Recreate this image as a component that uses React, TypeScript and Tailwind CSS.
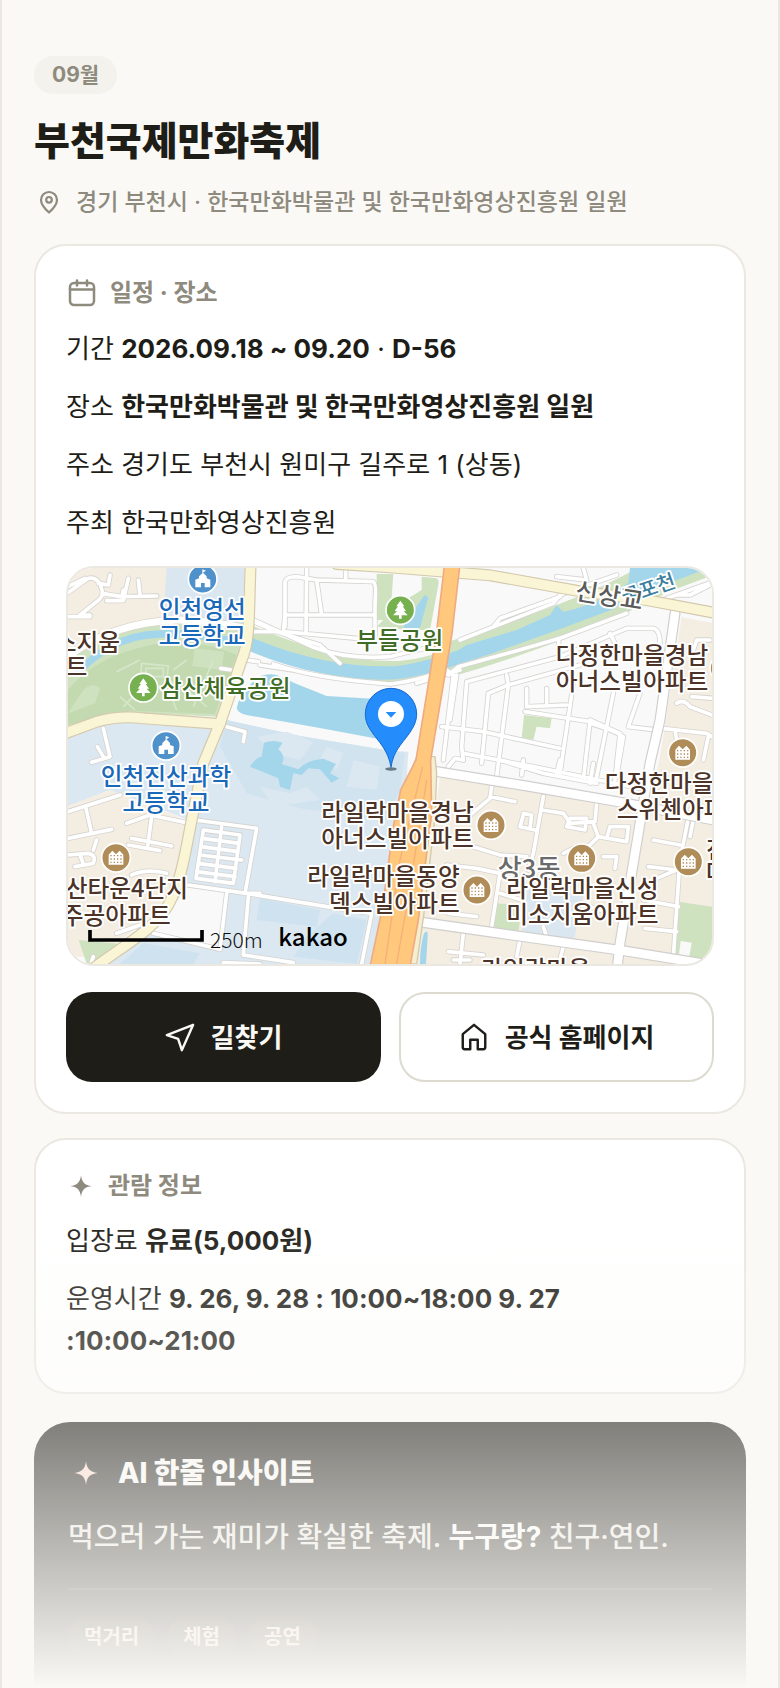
import React from 'react';

const tags = ['먹거리', '체험', '공연'];

const INK = '#4b3327';
const BLUE = '#1a68b8';
const GREEN = '#3f6d25';

type Label = {
  text: string;
  x: number;
  y: number;
  color: string;
  anchor?: 'start' | 'middle' | 'end';
  rotate?: number;
  size?: number;
};

const labels: Label[] = [
  { text: '굴포천', x: 1694, y: 134, color: '#3c7f9f', rotate: -19, size: 60 },
  { text: '신상교', x: 1543, y: 118, color: '#5b5b5b', rotate: 9, size: 74 },
  { text: '상3동', x: 1313, y: 955, color: '#6a6a6a', size: 78 },
  { text: '인천영선', x: 427, y: 174, color: BLUE, anchor: 'middle' },
  { text: '고등학교', x: 427, y: 253, color: BLUE, anchor: 'middle' },
  { text: '스지움', x: 180, y: 273, color: INK, anchor: 'end' },
  { text: '트', x: 82, y: 345, color: INK, anchor: 'end' },
  { text: '삼산체육공원', x: 300, y: 412, color: GREEN },
  { text: '부들공원', x: 1019, y: 267, color: GREEN, anchor: 'middle' },
  { text: '다정한마을경남', x: 1716, y: 312, color: INK, anchor: 'middle' },
  { text: '아너스빌아파트', x: 1716, y: 390, color: INK, anchor: 'middle' },
  { text: '인천진산과학', x: 318, y: 675, color: BLUE, anchor: 'middle' },
  { text: '고등학교', x: 318, y: 753, color: BLUE, anchor: 'middle' },
  { text: '라일락마을경남', x: 1241, y: 782, color: INK, anchor: 'end' },
  { text: '아너스빌아파트', x: 1241, y: 861, color: INK, anchor: 'end' },
  { text: '라일락마을동양', x: 1199, y: 976, color: INK, anchor: 'end' },
  { text: '덱스빌아파트', x: 1199, y: 1055, color: INK, anchor: 'end' },
  { text: '삼산타운4단지', x: 384, y: 1012, color: INK, anchor: 'end' },
  { text: '주공아파트', x: 332, y: 1091, color: INK, anchor: 'end' },
  { text: '라일락마을신성', x: 1567, y: 1010, color: INK, anchor: 'middle' },
  { text: '미소지움아파트', x: 1567, y: 1089, color: INK, anchor: 'middle' },
  { text: '다정한마을', x: 1634, y: 695, color: INK },
  { text: '스위첸아파트', x: 1670, y: 774, color: INK },
  { text: '진', x: 1938, y: 894, color: INK },
  { text: '마', x: 1938, y: 962, color: INK },
  { text: '라일락마을', x: 1264, y: 1253, color: INK },
];

// narrow residential streets
const lanes = [
  'M24 98 L85 55 Q115 48 126 90 Q132 110 110 125 L60 165 H90 M126 100 L185 110 L290 108 M140 122 H190 L205 55 M150 45 L145 75 L115 70 M185 110 L190 90 M235 60 L240 105 M24 80 L75 55 M24 170 H90',
  'M24 755 L180 705 M24 835 L155 808 M78 745 L95 820 M24 885 L85 880 Q110 885 100 910 L45 920 M60 885 L70 912 M110 840 L100 870',
  'M200 790 L270 765 L390 790 M275 770 L262 865 M205 855 L300 872 M215 835 L335 858 M215 945 Q260 925 320 940 M225 980 Q270 950 330 965',
  'M95 1205 L100 1190 M170 1120 L240 1095 M130 505 L150 590 L95 607 M112 560 L130 590',
  'M405 780 L590 805 L555 1000 M600 1000 L560 1000 L385 975 M560 1000 L800 1040 L935 1060 L905 1212 M565 1010 L550 1185 L700 1208 M500 1000 L480 1168 L280 1120 M490 1208 L600 1212 M500 500 L555 515 L550 545',
  'M430 810 L540 825 L520 970 L408 955 Z M485 800 L465 965 M427 835 L537 850 M424 860 L534 875 M420 885 L545 900 M415 910 L528 925 M410 935 L525 950',
  'M595 305 L560 300 M482 325 L515 330 M600 315 L700 330 M640 312 Q760 355 990 372 Q1060 365 1130 340 M580 185 L650 215 L780 255 L840 310 M580 215 L650 215 M580 180 Q680 225 760 262 Q860 300 990 290 Q1070 270 1140 255',
  'M675 200 L675 65 Q680 50 710 50 L740 55 L770 60 L940 65 Q950 70 945 130 V240 L670 215 L675 165 H940 M740 24 L738 220 M770 60 L785 165 M857 24 V62',
  'M1200 240 L1480 130 L1500 105 L1670 45 M1570 24 L1580 60 L1490 50 M1300 200 L1320 175 L1500 110 M1780 130 L1960 65 M1850 105 H1890 L1960 70',
  'M1165 345 L1195 320 L1360 275 L1500 235 L1700 160 M1070 370 L1200 330',
  'M1210 600 L1205 560 L1220 365 L1500 290 L1700 205 L1780 205 Q1800 210 1800 250 L1790 290',
  'M1340 345 L1345 375 L1310 650 M1345 375 L1560 315 M1265 610 L1285 400 L1345 375 M1145 500 L1270 515 L1430 550 L1500 565 M1210 580 L1420 620 L1760 690 M1540 370 L1500 640 M1395 455 L1590 485 L1570 660 M1400 385 V440 L1520 435 M1460 385 V430 M1660 400 L1610 650 M1590 480 L1680 520 L1665 660 M1590 490 Q1660 510 1690 530 L1670 650 M1740 400 L1705 500 L1790 510 M1495 235 L1500 290 M1650 220 L1670 260',
  'M1160 330 L1180 345 L1150 600 M1190 345 L1170 480 M1165 620 L1185 595 L1210 600',
  'M1805 505 L1940 520 L1956 530 M1850 430 Q1870 415 1890 440 L1956 465 M1845 510 L1850 540 M1950 240 L1910 240 L1900 270 M1895 410 L1960 415 M1945 530 L1930 600',
  'M1295 680 L1290 715 L1225 770 M1290 710 L1365 725 M1450 710 L1420 880 L1405 930 M1445 750 L1510 760 L1530 790 L1605 785 L1610 730 M1530 775 L1580 775 L1575 810 L1520 800 Z M1600 790 L1615 830 L1700 845 L1705 800 L1650 800 L1640 835 M1615 830 L1575 870 M1380 800 L1425 810 M1390 760 L1415 765 L1410 805 M1390 765 L1380 800',
  'M1240 860 L1320 885 L1400 890 M1160 915 L1250 925 L1320 940 L1295 1100 M1320 1000 L1385 1020 M1510 880 L1540 865 M1630 890 H1670 L1665 925 M1750 1020 L1855 1040 M1755 1105 L1850 1115 M1890 750 L1860 900 L1840 1190 M1780 840 L1860 855 M1765 920 L1850 930 L1790 955 M1900 780 L1890 830',
  'M1210 1120 L1200 1212 M1165 1175 L1270 1185 M1180 1200 H1230 M1380 1140 L1370 1190 M1510 1160 L1500 1200 M1165 1060 L1250 1070 M1590 1040 L1650 1060 M1450 1100 L1460 1130',
  'M1320 600 L1450 640 L1610 670 M1500 600 L1490 640 M1390 600 L1385 645 M1600 610 L1590 670',
];

const avenues = [
  'M1115 632 L1400 678 L1690 728 L1960 780',
  'M1845 160 L1800 480 L1770 610 L1735 820 L1680 1150 L1672 1220',
  'M1080 1086 L1290 1116 L1690 1172 L1960 1216',
];

const yellowRoads = [
  'M830 12 L990 22 L1290 46 L1550 92 L1770 122 L1960 158',
  'M10 522 L110 485 Q180 466 250 475 L480 492',
  'M572 10 C566 140 572 240 545 300 L480 490 L430 610 L395 780 C375 880 365 960 325 1035 C280 1110 200 1150 100 1225',
];

const schools = [[428, 57], [318, 557]];
const parks = [[250, 383], [1021, 150]];
const apartments = [[168, 893], [1293, 795], [1251, 990], [1565, 895], [1868, 578], [1885, 905], [1993, 325]];

const FestivalMap: React.FC = () => (
  <svg
    viewBox="24 24 1932 1188"
    preserveAspectRatio="xMidYMid slice"
    className="block w-full h-[396px]"
    role="img"
    aria-label="한국만화박물관 주변 지도"
    fontFamily="'Noto Sans CJK KR', sans-serif"
  >
    <rect x="24" y="24" width="1932" height="1188" fill="#f9f9f9" />

    {/* land use */}
    <path d="M24 24 H322 L312 180 Q130 200 24 300 Z" fill="#f4ede2" />
    <path d="M320 24 H555 L545 210 L310 178 Z" fill="#dbe7f0" />
    <path d="M24 310 C120 215 240 190 360 190 L545 215 L530 330 L470 470 L200 457 L24 510 Z" fill="#cfe2c0" />
    <path d="M24 390 C90 310 190 268 290 252 C380 240 460 255 530 285 L465 462 L210 452 L24 495 Z" fill="#c3dab0" />
    <path d="M405 265 L492 275 L485 330 L397 318 Z" fill="#cfe2c0" />
    <path d="M70 390 Q100 365 120 385 L105 430 L24 460 Z" fill="#cfe2c0" />
    <path d="M245 310 L325 318 L318 380 L240 370 Z M258 325 H310 V350 H258 Z M170 335 L240 300 M180 410 L225 450 M325 360 Q400 400 440 440 M330 400 L350 450 M380 300 L340 330 M190 440 L250 380 M400 440 L460 300" fill="none" stroke="#d6e6ca" strokeWidth="5" />
    <path d="M24 530 Q150 475 250 492 L478 508 L440 600 L400 785 L150 690 L24 738 Z" fill="#dce8f1" />
    <path d="M24 738 L150 690 L400 788 L365 930 L320 1030 L210 1120 L110 1190 L24 1190 Z" fill="#f4ede2" />
    <path d="M24 1140 V1212 H50 L24 1140 Z" fill="#f4ede2" />
    <path d="M56 1140 L185 1152 L95 1212 H80 Z" fill="#cfe2c0" />
    <path d="M500 480 L720 528 L990 572 L1045 575 L1040 660 L1000 800 L970 1040 L930 1212 H110 L230 1140 L330 1050 L375 930 L405 780 L440 620 Z" fill="#dbe8f1" />
    <path d="M385 978 L500 1000 L480 1162 L270 1118 L330 1050 Z" fill="#f9f9f9" />
    <path d="M500 480 L720 528 L990 572 L1035 578 L1020 690 L980 780 L720 745 L560 700 L480 560 Z" fill="#d0e3ef" />
    <path d="M590 530 L680 515 L760 545 L720 600 L640 580 Z M800 560 L850 580 L830 630 L780 600 Z M880 600 L960 620 L950 690 L860 680 Z M600 680 L690 700 L740 680 L780 720 L640 740 Z" fill="#dbe8f1" />
    <path d="M600 1015 L780 1050 L770 1100 L590 1080 Z M820 1060 L920 1080 L890 1212 L700 1190 L740 1130 Z M250 1150 L420 1180 L400 1212 H180 Z" fill="#cfe2ef" />
    <path d="M530 445 Q535 410 570 375 Q600 335 650 345 L710 372 L800 408 L1000 420 V545 L800 508 L560 465 Q535 460 530 445 Z" fill="#a3d6eb" />
    <path d="M612 548 Q640 538 668 548 L655 568 Q680 590 665 612 L715 628 Q740 600 790 596 L828 612 L810 640 L838 655 L815 668 L780 628 L745 625 L725 645 L700 640 L690 690 L660 680 L655 655 L570 620 Q590 590 605 590 Z" fill="#a3d6eb" />

    {/* river and banks */}
    <path d="M560 225 C720 290 850 340 1020 335 C1120 325 1200 290 1300 258 L1500 195" fill="none" stroke="#cfe2c0" strokeWidth="64" />
    <path d="M1160 300 C1300 262 1500 190 1640 130 L1860 20" fill="none" stroke="#cfe2c0" strokeWidth="104" />
    <path d="M1710 24 H1945 L1780 105 L1700 110 Z" fill="#a3d6eb" />
    <path d="M1800 105 L1960 45 V24 H1945 L1760 95 Z" fill="#cfe2c0" />
    <path d="M50 340 C110 280 180 225 300 222 C400 215 480 240 560 250" fill="none" stroke="#a3d6eb" strokeWidth="22" />
    <path d="M560 248 C700 310 860 345 1010 338 C1100 328 1200 290 1300 258 L1490 190 L1650 130 L1740 70" fill="none" stroke="#a3d6eb" strokeWidth="40" />
    <path d="M1130 310 L1220 255 L1370 210 L1470 165 L1490 135 L1510 155 L1600 135 L1720 60 L1760 100 L1600 160 L1460 195 L1420 225 L1390 220 L1260 270 L1130 325 Z" fill="#a3d6eb" />
    <path d="M950 42 L1000 42 L990 180 L950 180 Z M1085 50 L1130 55 Q1138 60 1135 75 L1110 210 H1050 L950 200 L1020 130 L1085 90 Z" fill="#cfe2c0" />
    <path d="M1090 110 Q1100 100 1104 115 L1080 205 H1030 L1035 190 Z" fill="#a3d6eb" />

    {/* blocks east of the expressway */}
    <path d="M1865 172 L1956 188 V790 L1770 730 L1800 590 Z" fill="#f4ede2" />
    <path d="M1140 645 L1960 790 V1212 H1062 L1095 1030 Z" fill="#f4ede2" />
    <path d="M1860 1026 L1956 1040 V1212 L1838 1195 Z M1305 1030 L1385 1035 L1375 1118 L1292 1100 Z M1392 465 L1475 475 L1470 505 L1430 500 L1420 540 L1385 535 Z" fill="#cfe2c0" />
    <path d="M1862 1143 L1895 1148 L1885 1205 L1855 1200 Z" fill="#f9f9f9" />
    <path d="M1405 980 L1570 1005 L1540 1148 L1385 1112 Z" fill="#dbe7f0" />
    <path d="M1092 1120 Q1105 1105 1103 1130 L1098 1212 H1080 Q1080 1160 1092 1120 Z" fill="#a3d6eb" />

    <path d="M24 290 C120 215 240 185 350 180 C430 178 500 195 560 205" fill="none" stroke="#d9d4cc" strokeWidth="26" />
    <path d="M24 290 C120 215 240 185 350 180 C430 178 500 195 560 205" fill="none" stroke="#fff" strokeWidth="21" />
    <g fill="none" strokeLinecap="round" strokeLinejoin="round">
      {lanes.map(d => <path key={d} d={d} stroke="#d6d4d1" strokeWidth="16" />)}
      {lanes.map(d => <path key={d} d={d} stroke="#fff" strokeWidth="11" />)}
      {avenues.map(d => <path key={d} d={d} stroke="#d0cfcd" strokeWidth="33" />)}
      {avenues.map(d => <path key={d} d={d} stroke="#fff" strokeWidth="26" />)}
      {yellowRoads.map(d => <path key={d} d={d} stroke="#d3c9ae" strokeWidth="36" />)}
      {yellowRoads.map(d => <path key={d} d={d} stroke="#faf5d5" strokeWidth="29" />)}
    </g>

    {/* expressway */}
    <path d="M945 1212 L985 1040 L1010 800 L1030 690 L1070 590 L1125 590 L1130 640 L1125 770 L1092 1060 L1070 1212 Z" fill="#f6efcf" stroke="#d3c9ae" strokeWidth="4" />
    <path d="M1153 20 L1199 20 L1176 220 L1112 600 L1115 760 L1075 1080 L1050 1220 H930 L968 1040 L1000 800 L1022 690 L1068 600 L1128 230 Z" fill="#ffc87c" stroke="#efac83" strokeWidth="5" />
    <path d="M1088 620 L1020 900 L975 1212 M1100 660 L1050 980 L1010 1212" fill="none" stroke="#f5b079" strokeWidth="4" />

    {schools.map(([x, y]) => (
      <g key={`${x}-${y}`} transform={`translate(${x} ${y})`}>
        <circle r="43" fill="#4f91cb" stroke="#fff" strokeWidth="5" />
        <path d="M-22 25 V2 L-11 -2 V-8 L1 -19 L12 -8 V-2 L23 2 V25 H6 V12 H-5 V25 Z M-1 -15 V-29 L10 -25 L2 -20 V-15 Z" fill="#fff" />
      </g>
    ))}
    {parks.map(([x, y]) => (
      <g key={`${x}-${y}`} transform={`translate(${x} ${y})`}>
        <circle r="43" fill="#76b04f" stroke="#fff" strokeWidth="5" />
        <path d="M0 -28 L12 -11 H7 L17 3 H10 L22 16 H4 V26 H-4 V16 H-22 L-10 3 H-17 L-7 -11 H-12 Z" fill="#fff" />
      </g>
    ))}
    {apartments.map(([x, y]) => (
      <g key={`${x}-${y}`} transform={`translate(${x} ${y})`}>
        <circle r="43" fill="#b08c58" stroke="#fff" strokeWidth="5" />
        <path d="M-22 21 V-9 L-11 -21 L0 -10 L11 -21 L22 -9 V21 Z" fill="#fff" />
        <path d="M-17 -6 H18 M-17 4 H18 M-17 14 H18" stroke="#b08c58" strokeWidth="4" strokeDasharray="4 6" />
      </g>
    ))}

    {labels.map(l => (
      <text
        key={`${l.text}-${l.x}-${l.y}`}
        transform={`translate(${l.x} ${l.y}) rotate(${l.rotate ?? 0})`}
        textAnchor={l.anchor ?? 'start'}
        fontSize={l.size ?? 71}
        fontWeight="500"
        fill={l.color}
        stroke="#fff"
        strokeWidth="11"
        strokeLinejoin="round"
        paintOrder="stroke"
      >
        {l.text}
      </text>
    ))}

    {/* scale and provider */}
    <path d="M90 1110 V1140 H426 V1110" fill="none" stroke="#000" strokeWidth="11" />
    <text x="450" y="1163" fontSize="63" fontWeight="300" fill="#111">250m</text>
    <text x="655" y="1157" fontSize="72" fontWeight="500" fill="#000">kakao</text>

    {/* pin */}
    <ellipse cx="993" cy="627" rx="17" ry="5" fill="#3c4a58" opacity="0.7" />
    <path d="M993 622 C985 570 955 545 935 515 C922 496 916 482 916 462 A77 77 0 0 1 1070 462 C1070 482 1062 500 1048 520 C1022 556 1000 574 993 622 Z" fill="#258cfb" stroke="#1668d0" strokeWidth="3" />
    <circle cx="993" cy="462" r="39" fill="#fff" />
    <path d="M977 456 H1009 L993 473 Z" fill="#258cfb" />
  </svg>
);

const Sparkle: React.FC<{ className: string }> = ({ className }) => (
  <svg viewBox="0 0 24 24" fill="currentColor" aria-hidden="true" className={className}>
    <path d="M12 2 C12.8 8.6 15.4 11.2 22 12 C15.4 12.8 12.8 15.4 12 22 C11.2 15.4 8.6 12.8 2 12 C8.6 11.2 11.2 8.6 12 2 Z" />
  </svg>
);

const App: React.FC = () => {
  return (
    <main className="relative flex min-h-screen w-full flex-col overflow-hidden border-x-2 border-[#eae8e1] bg-[#faf9f5] px-8 pt-14 font-['Inter','Noto_Sans_CJK_KR',sans-serif] text-[#1e1d18]">
      <header className="flex flex-col items-start">
        <span className="flex h-[38px] items-center rounded-full bg-[#f3f2ed] px-[18px] text-[21px] font-bold text-[#8e8a7e]">
          09월
        </span>
        <h1 className="mt-5 text-[39px] leading-[54px] font-extrabold">부천국제만화축제</h1>
        <p className="mt-3 flex items-center gap-[15px] pl-[3px] text-[23px] leading-[44px] font-medium text-[#8e8a7e]">
          <svg viewBox="0 0 24 24" fill="none" stroke="currentColor" strokeWidth="2.2" strokeLinejoin="round" aria-hidden="true" className="size-6">
            <path d="M12 22.5 C8 19 4 14.5 4 10 A8 8 0 0 1 20 10 C20 14.5 16 19 12 22.5 Z" />
            <circle cx="12" cy="9.8" r="2.8" />
          </svg>
          경기 부천시 · 한국만화박물관 및 한국만화영상진흥원 일원
        </p>
      </header>

      <section className="mt-5 rounded-[32px] border-2 border-[#eae8e1] bg-white p-[30px]">
        <h2 className="flex h-[34px] items-center gap-3 text-[24px] font-bold text-[#8e8a7e]">
          <svg viewBox="0 0 32 32" fill="none" stroke="currentColor" strokeWidth="2.5" strokeLinecap="round" aria-hidden="true" className="size-8">
            <rect x="4" y="6" width="24" height="22" rx="4" />
            <path d="M4 12.5 H28 M11 3.5 V8.5 M21 3.5 V8.5" />
          </svg>
          일정 · 장소
        </h2>
        <div className="mt-[18px] flex flex-col gap-4 text-[26px] leading-[42px]">
          <p>기간 <b className="font-bold">2026.09.18 ~ 09.20</b> · <b className="font-bold">D-56</b></p>
          <p>장소 <b className="font-bold">한국만화박물관 및 한국만화영상진흥원 일원</b></p>
          <p>주소 경기도 부천시 원미구 길주로 1 (상동)</p>
          <p>주최 한국만화영상진흥원</p>
        </div>
        <div className="mt-[22px] overflow-hidden rounded-[28px] border-2 border-[#eae8e1]">
          <FestivalMap />
        </div>
        <div className="mt-[26px] grid grid-cols-2 gap-[18px] text-[26px] font-bold">
          <button type="button" className="flex h-[90px] items-center justify-center gap-4 rounded-[26px] bg-[#1e1d18] text-[#faf9f5]">
            <svg viewBox="0 0 32 32" fill="none" stroke="currentColor" strokeWidth="2.6" strokeLinejoin="round" aria-hidden="true" className="size-[30px]">
              <path d="M30 3 L2 14 L14 18 L18 30 Z" />
            </svg>
            길찾기
          </button>
          <a href="#homepage" className="flex h-[90px] items-center justify-center gap-4 rounded-[26px] border-2 border-[#dddad0]">
            <svg viewBox="0 0 32 32" fill="none" stroke="currentColor" strokeWidth="2.6" strokeLinejoin="round" aria-hidden="true" className="size-[30px]">
              <path d="M16 3 L28 13 V27 Q28 29 26 29 H20 V19 H12 V29 H6 Q4 29 4 27 V13 Z" />
            </svg>
            공식 홈페이지
          </a>
        </div>
      </section>

      <section className="mt-6 rounded-[32px] border-2 border-[#eae8e1] bg-white p-[30px]">
        <h2 className="flex h-8 items-center gap-[14px] text-[24px] font-bold text-[#8e8a7e]">
          <Sparkle className="ml-[2px] size-[26px]" />
          관람 정보
        </h2>
        <div className="mt-[18px] flex flex-col gap-4 text-[26px] leading-[42px]">
          <p>입장료 <b className="font-bold">유료(5,000원)</b></p>
          <p>운영시간 <b className="font-bold">9. 26, 9. 28 : 10:00~18:00 9. 27 :10:00~21:00</b></p>
        </div>
      </section>

      <section className="mt-7 flex-1 rounded-t-[36px] bg-[#1e1d18] px-[34px] pt-[30px] text-[#faf9f5]">
        <h2 className="flex h-[42px] items-center gap-[18px] text-[28px] font-extrabold">
          <Sparkle className="ml-1 size-7 text-[#ffd9cc]" />
          AI 한줄 인사이트
        </h2>
        <p className="mt-5 text-[28px] leading-[46px] font-medium text-[#ebe9e2]">
          먹으러 가는 재미가 확실한 축제. <b className="font-bold text-white">누구랑?</b> 친구·연인.
        </p>
        <ul className="mt-7 flex gap-3 border-t-2 border-white/10 pt-7 text-[20px] font-bold text-[#ffd9cc]">
          {tags.map(tag => (
            <li key={tag} className="flex h-[38px] items-center rounded-full bg-[#ff8866]/10 px-4">{tag}</li>
          ))}
        </ul>
      </section>

      <div className="pointer-events-none absolute inset-x-0 bottom-0 h-[480px] bg-linear-to-b from-[#faf9f5]/0 to-[#faf9f5]" />
    </main>
  );
};

export default App;
